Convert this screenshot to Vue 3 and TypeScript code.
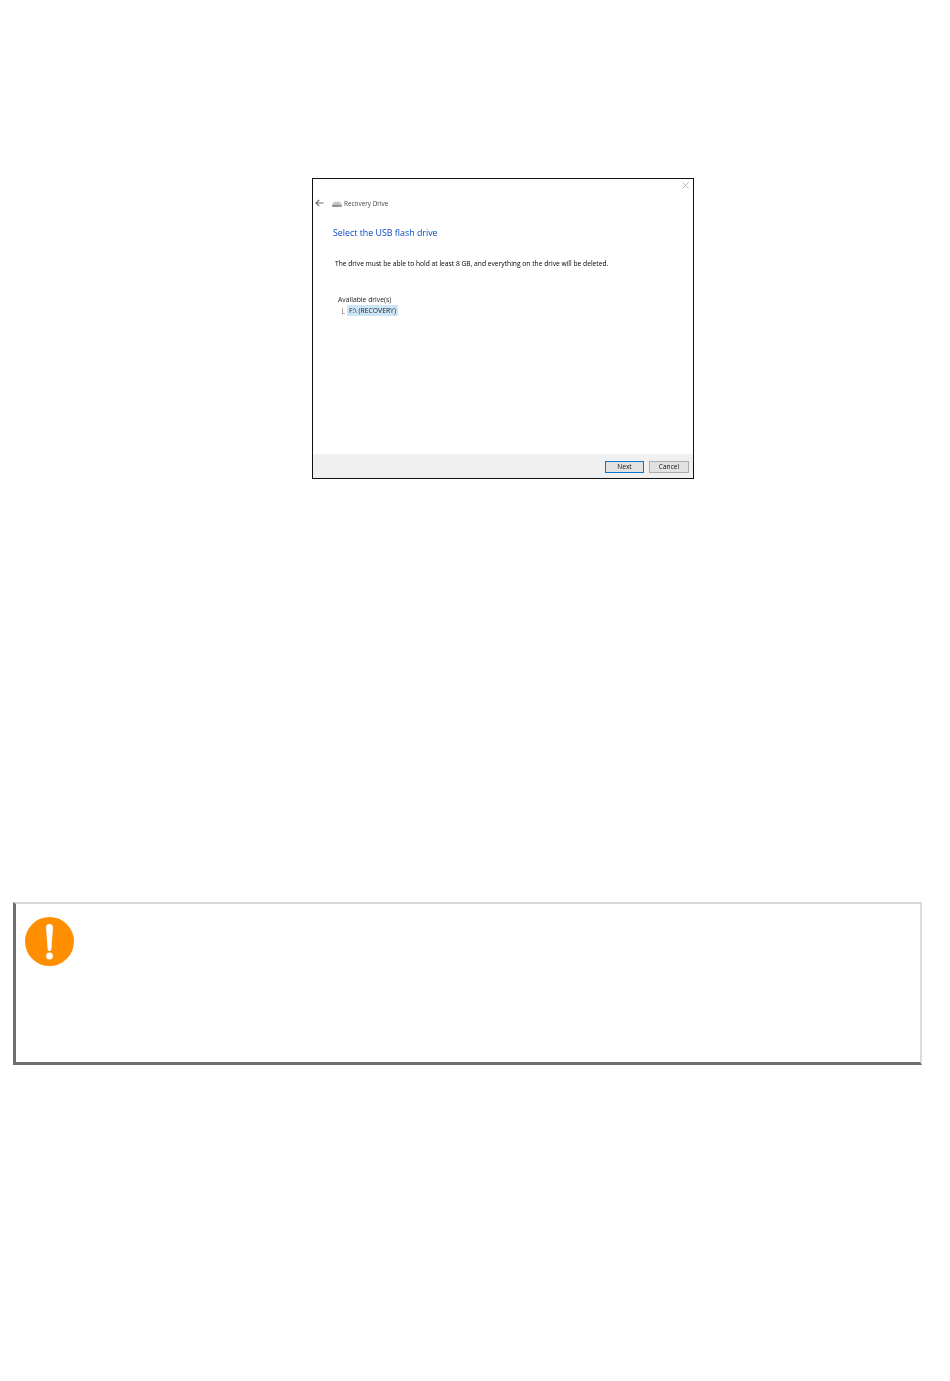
<script setup lang="ts">
const message = 'The drive must be able to hold at least 8 GB, and everything on the drive will be deleted.'
</script>

<template>
  <main class="page">
    <section class="dialog">
      <div class="titlebar">
        <svg class="close" viewBox="0 0 8 8" width="7" height="7">
          <path d="M0.5 0.5 7.5 7.5M7.5 0.5 0.5 7.5" stroke="#b4b4b4" stroke-width="1" fill="none" />
        </svg>
      </div>
      <div class="nav">
        <svg class="back" viewBox="0 0 9 8" width="9" height="8">
          <path d="M8.5 4H1.2M4.2 0.8 1 4l3.2 3.2" stroke="#6f6f6f" stroke-width="1.2" fill="none" />
        </svg>
        <svg class="drive" viewBox="0 0 11 7" width="10" height="6">
          <path d="M2 1h7l2 3v3H0V4z" fill="#c3c6c7" />
          <path d="M0 4.5h11V7H0z" fill="#8d9193" />
          <path d="M8 5.4h2v.8H8z" fill="#dfe8d8" />
        </svg>
        <span class="app-name">Recovery Drive</span>
      </div>
      <div class="body">
        <h1 class="heading">Select the USB flash drive</h1>
        <p class="message">{{ message }}</p>
        <div class="drives">
          <div class="drives-label">Available drive(s)</div>
          <div class="drive-row">
            <span class="tree-line"></span>
            <span class="drive-item">F:\ (RECOVERY)</span>
          </div>
        </div>
      </div>
      <div class="footer">
        <button class="btn primary" type="button">Next</button>
        <button class="btn" type="button">Cancel</button>
      </div>
    </section>

    <section class="callout">
      <svg class="important" viewBox="0 0 49 49" width="49" height="49">
        <circle cx="24.5" cy="24.5" r="24.5" fill="#ff8f00" />
        <path d="M21 10.5a3.5 3.5 0 0 1 7 0l-1.6 21.5a1.9 1.9 0 0 1-3.8 0z" fill="#fff" />
        <circle cx="24.5" cy="39" r="3.4" fill="#fff" />
      </svg>
    </section>
  </main>
</template>

<style>
html,
body {
  background: #fff;
}
</style>

<style scoped>
.page {
  height: 1381px;
  box-sizing: border-box;
  padding-top: 178px;
  font-family: "Open Sans", "Noto Sans", sans-serif;
  overflow: hidden;
}
.dialog {
  width: 382px;
  height: 301px;
  margin-left: 312px;
  box-sizing: border-box;
  border: 1px solid #111;
  display: flex;
  flex-direction: column;
  background: #fff;
  filter: blur(0.3px);
}
.titlebar {
  height: 17px;
  display: flex;
  justify-content: flex-end;
  padding: 3px 4px 0 0;
  box-sizing: border-box;
}
.close {
  display: block;
}
.nav {
  height: 14px;
  display: flex;
  align-items: center;
  padding-left: 2px;
}
.back {
  margin-right: 8px;
}
.drive {
  margin-right: 2px;
  margin-top: 2px;
}
.app-name {
  font-size: 6.4px;
  color: #444;
}
.body {
  flex: 1;
  padding: 17px 0 0 20px;
}
.heading {
  margin: 0;
  font-size: 8.85px;
  line-height: 12px;
  font-weight: 400;
  color: #0a4cc4;
}
.message {
  margin: 20px 0 0 2px;
  font-size: 6.7px;
  line-height: 10px;
  font-weight: 500;
  color: #000;
}
.drives {
  margin: 26px 0 0 5px;
  font-size: 6.8px;
  color: #222;
}
.drives-label {
  line-height: 10px;
}
.drive-row {
  display: flex;
  align-items: center;
  margin-left: 4px;
  height: 11px;
}
.tree-line {
  width: 3px;
  height: 6px;
  margin-right: 2px;
  border-left: 1px solid #aaa;
  border-bottom: 1px solid #aaa;
  box-sizing: border-box;
}
.drive-item {
  background: #cde6f7;
  padding: 0 2px;
  line-height: 11px;
  font-size: 6.8px;
  color: #222;
}
.footer {
  height: 24px;
  background: #f0f0f0;
  display: flex;
  justify-content: flex-end;
  align-items: flex-start;
  gap: 5px;
  padding: 7px 4px 0 0;
  box-sizing: border-box;
}
.btn {
  width: 40px;
  height: 12px;
  padding: 0;
  border: 1px solid #adadad;
  background: #e1e1e1;
  font-family: inherit;
  font-size: 6.6px;
  line-height: 10px;
  color: #111;
}
.btn.primary {
  width: 39px;
  border-color: #0a78d0;
}
.callout {
  width: 909px;
  height: 163px;
  margin: 423px 0 0 13px;
  box-sizing: border-box;
  border-style: solid;
  border-color: #d8d8d8 #dcdcdc #6e6e6e #6e6e6e;
  border-width: 2px 2px 3px 3px;
  padding: 13px 0 0 9px;
}
.important {
  display: block;
}
</style>
